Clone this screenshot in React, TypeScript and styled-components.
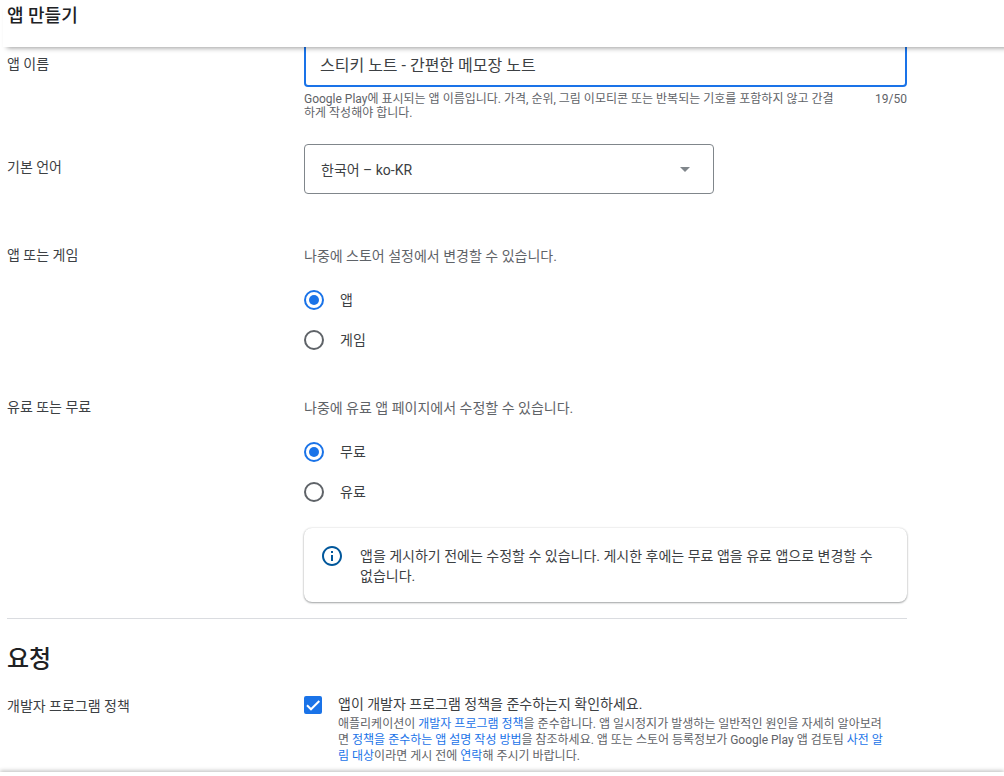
import React, { useState } from "react";
import styled, { createGlobalStyle } from "styled-components";

const GlobalStyle = createGlobalStyle`
  *, *::before, *::after { box-sizing: border-box; }
  body {
    margin: 0;
    background: #fff;
    color: #3c4043;
    font-family: Roboto, "Noto Sans CJK KR", sans-serif;
    font-size: 14px;
    line-height: 20px;
  }
`;

const Shell = styled.div`
  display: flex;
  flex-direction: column;
  height: 100vh;
  overflow: hidden;
`;

const Header = styled.header`
  position: relative;
  z-index: 1;
  flex: none;
  height: 47px;
  margin: 0 -8px 0 3px;
  padding: 4px 4px 0;
  background: #fff;
  box-shadow: 0 5px 5px -4px rgba(0, 0, 0, 0.4);
`;

const PageTitle = styled.h1`
  margin: 0;
  color: #202124;
  font-size: 18px;
  font-weight: 500;
  line-height: 24px;
`;

const Main = styled.main`
  flex: 1;
  min-height: 0;
  padding: 0 7px;
  overflow-y: auto;
  scrollbar-width: none;
`;

/* The form is scrolled slightly under the header. */
const Form = styled.form`
  max-width: 900px;
  margin-top: -16px;
`;

const Row = styled.div<{ $gap?: number }>`
  display: grid;
  grid-template-columns: 33% minmax(0, 1fr);
  margin-bottom: ${(p) => p.$gap ?? 0}px;
`;

const RowLabel = styled.label<{ $top?: number }>`
  padding-top: ${(p) => p.$top ?? 0}px;
`;

const NameInput = styled.input`
  display: block;
  width: 100%;
  height: 56px;
  padding: 10px 14px 0;
  border: 2px solid #1a73e8;
  border-radius: 4px;
  outline: none;
  background: #fff;
  color: #3c4043;
  font: 16px/24px Roboto, "Noto Sans CJK KR", sans-serif;
`;

const Helper = styled.div`
  display: flex;
  justify-content: space-between;
  gap: 16px;
  padding-top: 5px;
  color: #5f6368;
  font-size: 12px;
  line-height: 14px;
`;

const SelectBox = styled.div`
  position: relative;
  max-width: 410px;

  svg {
    position: absolute;
    top: 23px;
    right: 24px;
    pointer-events: none;
  }
`;

const Select = styled.select`
  display: block;
  appearance: none;
  width: 100%;
  height: 50px;
  padding: 2px 40px 0 16px;
  border: 1px solid #80868b;
  border-radius: 4px;
  background: #fff;
  color: #3c4043;
  font: 14px/20px Roboto, "Noto Sans CJK KR", sans-serif;
`;

const Hint = styled.p`
  margin: 0 0 24px;
  padding-top: 1px;
  color: #5f6368;
`;

const Options = styled.div`
  display: flex;
  flex-direction: column;
  gap: 20px;
`;

const Option = styled.label`
  display: flex;
  align-items: center;
  gap: 16px;
`;

const Radio = styled.input`
  appearance: none;
  display: grid;
  place-items: center;
  flex: none;
  width: 20px;
  height: 20px;
  margin: 0;
  border: 2px solid #5f6368;
  border-radius: 50%;

  &:checked { border-color: #1a73e8; }
  &:checked::before {
    content: "";
    width: 10px;
    height: 10px;
    border-radius: 50%;
    background: #1a73e8;
  }
`;

const Notice = styled.div`
  display: flex;
  align-items: flex-start;
  gap: 16px;
  margin-top: 26px;
  padding: 16px;
  border-radius: 8px;
  box-shadow: 0 1px 2px rgba(60, 64, 67, 0.45), 0 0 2px 0 rgba(60, 64, 67, 0.2);

  svg { flex: none; }
  p { margin: 0; padding-top: 2px; }
`;

const Divider = styled.hr`
  height: 1px;
  margin: 0 0 24px;
  border: 0;
  background: #dadce0;
`;

const SectionTitle = styled.h2`
  margin: 0 0 19px;
  color: #202124;
  font-size: 24px;
  font-weight: 500;
  line-height: 32px;
`;

const Consent = styled.div`
  display: flex;
  align-items: flex-start;
  gap: 16px;
`;

const CheckWrap = styled.span`
  position: relative;
  flex: none;
  width: 18px;
  height: 18px;
  margin-top: 2px;

  svg {
    position: absolute;
    inset: 0;
    pointer-events: none;
  }
`;

const Checkbox = styled.input`
  appearance: none;
  display: block;
  width: 18px;
  height: 18px;
  margin: 0;
  border: 2px solid #5f6368;
  border-radius: 2px;

  &:checked { border-color: #1a73e8; background: #1a73e8; }
`;

const Caption = styled.p`
  margin: 2px 0 0;
  color: #5f6368;
  font-size: 12px;
  line-height: 16px;
  white-space: nowrap;
`;

const Link = styled.a`
  color: #1a73e8;
  text-decoration: none;
`;

const Footer = styled.footer`
  position: relative;
  z-index: 1;
  flex: none;
  height: 4px;
  background: #fff;
  box-shadow: 0 -1px 4px rgba(0, 0, 0, 0.3);
`;

function RadioGroup({ name, label, options }: { name: string; label: string; options: string[] }) {
  const [value, setValue] = useState(options[0]);
  return (
    <Options role="radiogroup" aria-label={label}>
      {options.map((option) => (
        <Option key={option}>
          <Radio type="radio" name={name} checked={value === option} onChange={() => setValue(option)} />
          {option}
        </Option>
      ))}
    </Options>
  );
}

export default function App() {
  const [name, setName] = useState("스티키 노트 - 간편한 메모장 노트");
  const [agreed, setAgreed] = useState(true);
  return (
    <Shell>
      <GlobalStyle />
      <Header>
        <PageTitle>앱 만들기</PageTitle>
      </Header>
      <Main>
        <Form>
          <Row $gap={24}>
            <RowLabel htmlFor="app-name" $top={23}>앱 이름</RowLabel>
            <div>
              <NameInput id="app-name" type="text" value={name} onChange={(e) => setName(e.target.value)} />
              <Helper>
                <span>
                  Google Play에 표시되는 앱 이름입니다. 가격, 순위, 그림 이모티콘 또는 반복되는 기호를 포함하지 않고 간결
                  <br />
                  하게 작성해야 합니다.
                </span>
                <span>{name.length}/50</span>
              </Helper>
            </div>
          </Row>
          <Row $gap={51}>
            <RowLabel htmlFor="language" $top={13}>기본 언어</RowLabel>
            <SelectBox>
              <Select id="language" defaultValue="ko-KR">
                <option value="ko-KR">한국어 – ko-KR</option>
              </Select>
              <svg width="10" height="5" viewBox="0 0 10 5" aria-hidden="true">
                <path d="M0 0h10L5 5z" fill="#80868b" />
              </svg>
            </SelectBox>
          </Row>
          <Row $gap={47}>
            <RowLabel as="div">앱 또는 게임</RowLabel>
            <div>
              <Hint>나중에 스토어 설정에서 변경할 수 있습니다.</Hint>
              <RadioGroup name="kind" label="앱 또는 게임" options={["앱", "게임"]} />
            </div>
          </Row>
          <Row $gap={16}>
            <RowLabel as="div">유료 또는 무료</RowLabel>
            <div>
              <Hint>나중에 유료 앱 페이지에서 수정할 수 있습니다.</Hint>
              <RadioGroup name="price" label="유료 또는 무료" options={["무료", "유료"]} />
              <Notice>
                <svg width="24" height="24" viewBox="0 0 24 24" fill="#01579b" aria-hidden="true">
                  <path d="M11 7h2v2h-2zm0 4h2v6h-2zm1-9C6.480 2 2 6.480 2 12s4.480 10 10 10 10-4.480 10-10S17.520 2 12 2zm0 18c-4.410 0-8-3.590-8-8s3.590-8 8-8 8 3.590 8 8-3.590 8-8 8z" />
                </svg>
                <p>
                  앱을 게시하기 전에는 수정할 수 있습니다. 게시한 후에는 무료 앱을 유료 앱으로 변경할 수
                  <br />
                  없습니다.
                </p>
              </Notice>
            </div>
          </Row>
          <Divider />
          <SectionTitle>요청</SectionTitle>
          <Row>
            <RowLabel as="div" $top={2}>개발자 프로그램 정책</RowLabel>
            <Consent>
              <CheckWrap>
                <Checkbox id="policy" type="checkbox" checked={agreed} onChange={(e) => setAgreed(e.target.checked)} />
                {agreed && (
                  <svg width="18" height="18" viewBox="0 0 18 18" fill="none" aria-hidden="true">
                    <path d="M3 9.300L7 13.300L15.300 5" stroke="#fff" strokeWidth="2" />
                  </svg>
                )}
              </CheckWrap>
              <div>
                <label htmlFor="policy">앱이 개발자 프로그램 정책을 준수하는지 확인하세요.</label>
                <Caption>
                  애플리케이션이 <Link href="#policy">개발자 프로그램 정책</Link>을 준수합니다. 앱 일시정지가 발생하는 일반적인 원인을 자세히 알아보려
                  <br />
                  면 <Link href="#guide">정책을 준수하는 앱 설명 작성 방법</Link>을 참조하세요. 앱 또는 스토어 등록정보가 Google Play 앱 검토팀{" "}
                  <Link href="#notice">
                    사전 알
                    <br />
                    림 대상
                  </Link>
                  이라면 게시 전에 <Link href="#contact">연락</Link>해 주시기 바랍니다.
                </Caption>
              </div>
            </Consent>
          </Row>
        </Form>
      </Main>
      <Footer />
    </Shell>
  );
}
